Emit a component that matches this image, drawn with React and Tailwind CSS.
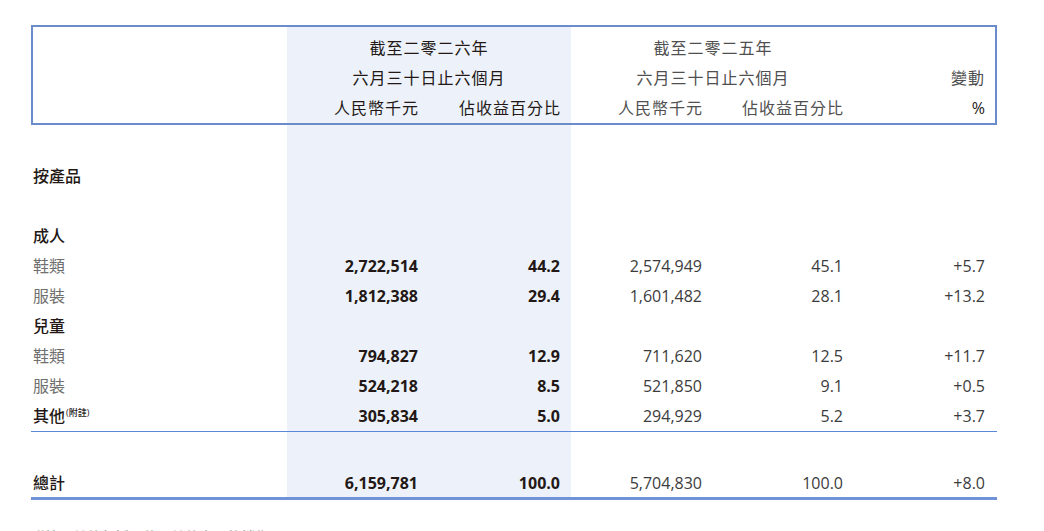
import React from "react";

const DARK = "text-[#231815]";

const rows = [
  { kind: "spacer", h: "h-[36px]" },
  { kind: "row", label: "按產品", strong: true },
  { kind: "row", label: "" },
  { kind: "row", label: "成人", strong: true },
  { kind: "row", label: "鞋類", v: ["2,722,514", "44.2", "2,574,949", "45.1", "+5.7"] },
  { kind: "row", label: "服裝", v: ["1,812,388", "29.4", "1,601,482", "28.1", "+13.2"] },
  { kind: "row", label: "兒童", strong: true },
  { kind: "row", label: "鞋類", v: ["794,827", "12.9", "711,620", "12.5", "+11.7"] },
  { kind: "row", label: "服裝", v: ["524,218", "8.5", "521,850", "9.1", "+0.5"] },
  { kind: "row", label: "其他", strong: true, note: true, v: ["305,834", "5.0", "294,929", "5.2", "+3.7"] },
  { kind: "line", cls: "h-[1px] bg-[#5a88d6]" },
  { kind: "spacer", h: "h-[36px]" },
  { kind: "row", label: "總計", strong: true, v: ["6,159,781", "100.0", "5,704,830", "100.0", "+8.0"], h: "h-[29px]" },
  { kind: "line", cls: "h-[3px] bg-[#6f93d6]" },
];

function Row({ r }) {
  const h = r.h || "h-[30px]";
  const v = r.v || ["", "", "", "", ""];
  return (
    <div className="grid grid-cols-[256px_142px_142px_142px_142px_142px]">
      <div className={`${h} flex items-center pl-[2px] ${r.strong ? DARK + " font-medium" : "text-[#6f6f6f]"}`}>
        <span>{r.label}</span>
        {r.note && <span className="text-[9px] self-start mt-[7px] ml-[1px] text-[#231815]">(附註)</span>}
      </div>
      <div className={`${h} bg-[#edf2fa] flex items-center justify-end pr-[11px] font-bold ${DARK}`}>{v[0]}</div>
      <div className={`${h} bg-[#edf2fa] flex items-center justify-end pr-[11px] font-bold ${DARK}`}>{v[1]}</div>
      <div className={`${h} flex items-center justify-end pr-[11px] text-[#3c3c3c]`}>{v[2]}</div>
      <div className={`${h} flex items-center justify-end pr-[12px] text-[#3c3c3c]`}>{v[3]}</div>
      <div className={`${h} flex items-center justify-end pr-[12px] text-[#3c3c3c]`}>{v[4]}</div>
    </div>
  );
}

function Spacer({ h }) {
  return (
    <div className="grid grid-cols-[256px_284px_426px]">
      <div className={h} />
      <div className={`${h} bg-[#edf2fa]`} />
      <div className={h} />
    </div>
  );
}

export default function App() {
  return (
    <div className="w-[1044px] h-[531px] overflow-hidden bg-white font-['Open_Sans','Noto_Sans_CJK_TC',sans-serif] text-[16px] leading-none">
      <div className="ml-[31px] pt-[25px] w-[966px]">
        {/* header box */}
        <div className="flex h-[100px] border-2 border-[#6a8cca]">
          <div className="w-[254px]" />
          <div className={`w-[284px] bg-[#edf2fa] pt-[6px] flex flex-col tracking-[1px] ${DARK}`}>
            <div className="h-[30px] flex items-center justify-center">截至二零二六年</div>
            <div className="h-[30px] flex items-center justify-center">六月三十日止六個月</div>
            <div className="grid grid-cols-2">
              <div className="h-[30px] flex items-center justify-end pr-[10px]">人民幣千元</div>
              <div className="h-[30px] flex items-center justify-end pr-[10px]">佔收益百分比</div>
            </div>
          </div>
          <div className="w-[284px] pt-[6px] flex flex-col tracking-[1px] text-[#505050]">
            <div className="h-[30px] flex items-center justify-center">截至二零二五年</div>
            <div className="h-[30px] flex items-center justify-center">六月三十日止六個月</div>
            <div className="grid grid-cols-2">
              <div className="h-[30px] flex items-center justify-end pr-[10px]">人民幣千元</div>
              <div className="h-[30px] flex items-center justify-end pr-[11px]">佔收益百分比</div>
            </div>
          </div>
          <div className="w-[140px] pt-[6px] flex flex-col text-[#505050]">
            <div className="h-[30px]" />
            <div className="h-[30px] flex items-center justify-end pr-[10px] tracking-[1px]">變動</div>
            <div className={`h-[30px] flex items-center justify-end pr-[10px] ${DARK}`}>%</div>
          </div>
        </div>

        {rows.map((r, i) =>
          r.kind === "spacer" ? (
            <Spacer key={i} h={r.h} />
          ) : r.kind === "line" ? (
            <div key={i} className={r.cls} />
          ) : (
            <Row key={i} r={r} />
          )
        )}

        <div className="mt-[27px] text-[14px] leading-[20px] text-[#8a8a8a]">
          附註：其他包括配件及其他產品的銷售。
        </div>
      </div>
    </div>
  );
}
